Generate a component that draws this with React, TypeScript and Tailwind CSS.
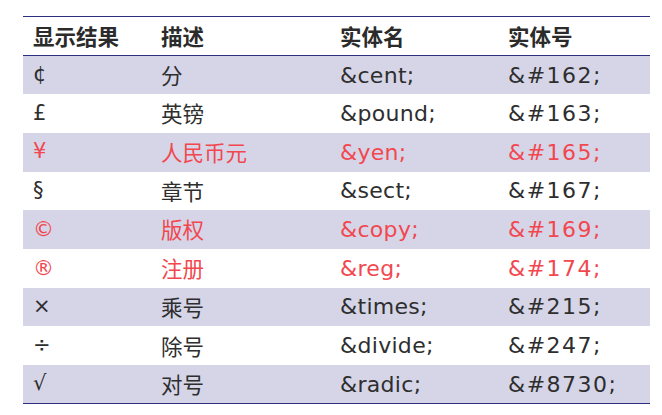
const rows: { sym: string; desc: string; name: string; num: string; red?: boolean }[] = [
  { sym: "¢", desc: "分", name: "&cent;", num: "&#162;" },
  { sym: "£", desc: "英镑", name: "&pound;", num: "&#163;" },
  { sym: "¥", desc: "人民币元", name: "&yen;", num: "&#165;", red: true },
  { sym: "§", desc: "章节", name: "&sect;", num: "&#167;" },
  { sym: "©", desc: "版权", name: "&copy;", num: "&#169;", red: true },
  { sym: "®", desc: "注册", name: "&reg;", num: "&#174;", red: true },
  { sym: "×", desc: "乘号", name: "&times;", num: "&#215;" },
  { sym: "÷", desc: "除号", name: "&divide;", num: "&#247;" },
  { sym: "√", desc: "对号", name: "&radic;", num: "&#8730;" },
];

const cjk = "font-['Noto_Sans_CJK_SC','Noto_Sans',sans-serif]";
const hand = "font-['DejaVu_Sans','Noto_Sans_CJK_SC',sans-serif]";

export default function App() {
  return (
    <div className="w-[662px] h-[415px] bg-white pt-[16px] pl-[23px]">
      <table className="w-[627px] border-collapse table-fixed">
        <colgroup>
          <col className="w-[128px]" />
          <col className="w-[179px]" />
          <col className="w-[168px]" />
          <col className="w-[152px]" />
        </colgroup>
        <thead>
          <tr className={`h-[39px] border-t-[1.5px] border-b-[1.5px] border-[#2e2e80] text-[#2b2b2b] text-[21.5px] font-bold ${cjk}`}>
            <th className="text-left font-bold pl-[10px]">显示结果</th>
            <th className="text-left font-bold pl-[10px]">描述</th>
            <th className="text-left font-bold pl-[10px]">实体名</th>
            <th className="text-left font-bold pl-[10px]">实体号</th>
          </tr>
        </thead>
        <tbody className="border-b-[1.5px] border-[#2e2e80]">
          {rows.map((r, i) => (
            <tr
              key={r.name}
              className={`h-[38.7px] ${i % 2 === 0 ? "bg-[#d5d5e7]" : "bg-white"} ${r.red ? "text-[#f2474f]" : "text-[#2e2e2e]"}`}
            >
              <td className={`pl-[10px] text-[21px] ${hand}`}>{r.sym}</td>
              <td className={`pl-[10px] text-[21.5px] ${cjk}`}>{r.desc}</td>
              <td className={`pl-[10px] text-[22px] tracking-[0.3px] ${hand}`}>{r.name}</td>
              <td className={`pl-[10px] text-[22px] tracking-[1.5px] ${hand}`}>{r.num}</td>
            </tr>
          ))}
        </tbody>
      </table>
    </div>
  );
}
